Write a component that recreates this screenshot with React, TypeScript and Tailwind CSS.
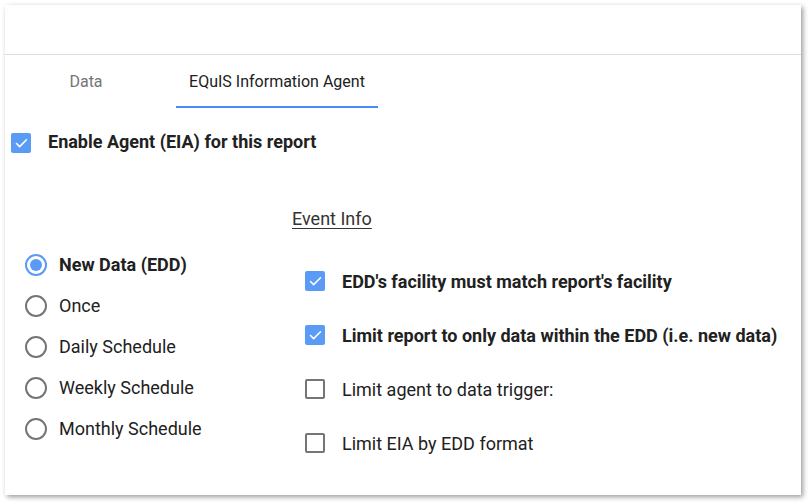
import { Check } from "lucide-react";

const font = { fontFamily: "Roboto, 'Noto Sans', sans-serif" };

const Box = ({ checked }: { checked: boolean }) =>
  checked ? (
    <div className="w-[20px] h-[20px] rounded-[2px] bg-[#5a9bf6] flex items-center justify-center shrink-0">
      <Check className="w-[15px] h-[15px] text-white" strokeWidth={2.5} />
    </div>
  ) : (
    <div className="w-[20px] h-[20px] rounded-[2px] border-2 border-[#757575] shrink-0" />
  );

const Radio = ({ on }: { on: boolean }) =>
  on ? (
    <div className="w-[22px] h-[22px] rounded-full border-2 border-[#5a9bf6] flex items-center justify-center shrink-0">
      <div className="w-[12px] h-[12px] rounded-full bg-[#5a9bf6]" />
    </div>
  ) : (
    <div className="w-[22px] h-[22px] rounded-full border-2 border-[#757575] shrink-0" />
  );

const schedules = ["New Data (EDD)", "Once", "Daily Schedule", "Weekly Schedule", "Monthly Schedule"];

const options = [
  { label: "EDD's facility must match report's facility", checked: true },
  { label: "Limit report to only data within the EDD (i.e. new data)", checked: true },
  { label: "Limit agent to data trigger:", checked: false },
  { label: "Limit EIA by EDD format", checked: false },
];

export default function App() {
  return (
    <div className="w-[810px] h-[504px] bg-white pt-[5px] pl-[5px]" style={font}>
      <div className="w-[796px] h-[490px] bg-white shadow-[2px_2px_5px_rgba(0,0,0,0.4)] text-[#212121]">
        <div className="h-[50px] border-b border-[#dcdcdc]" />

        {/* tabs */}
        <div className="h-[53px] flex items-stretch text-[16px]">
          <div className="w-[120px] ml-[21px] flex items-center justify-center text-[#757575]">Data</div>
          <div className="ml-[30px] w-[202px] flex items-center justify-center border-b-2 border-[#4a8af4] pt-[2px]">
            EQuIS Information Agent
          </div>
        </div>

        <div className="mt-[23px] h-[24px] flex items-center pl-[6px] gap-[17px]">
          <Box checked />
          <span className="text-[18px] font-bold -mt-[3px]">Enable Agent (EIA) for this report</span>
        </div>

        <div className="mt-[52px] ml-[287px] text-[18px] leading-[24px] underline underline-offset-[3px] text-[#333]">Event Info</div>

        <div className="flex mt-[13px]">
          <div className="w-[300px] pl-[20px] flex flex-col">
            {schedules.map((s, i) => (
              <div key={s} className="h-[41px] flex items-center gap-[12px]">
                <Radio on={i === 0} />
                <span className={`text-[18px] ${i === 0 ? "font-bold" : ""}`}>{s}</span>
              </div>
            ))}
          </div>
          <div className="flex flex-col mt-[10px]">
            {options.map((o) => (
              <div key={o.label} className="h-[54px] flex items-center gap-[17px]">
                <Box checked={o.checked} />
                <span className={`text-[18px] ${o.checked ? "font-bold" : ""}`}>{o.label}</span>
              </div>
            ))}
          </div>
        </div>
      </div>
    </div>
  );
}
